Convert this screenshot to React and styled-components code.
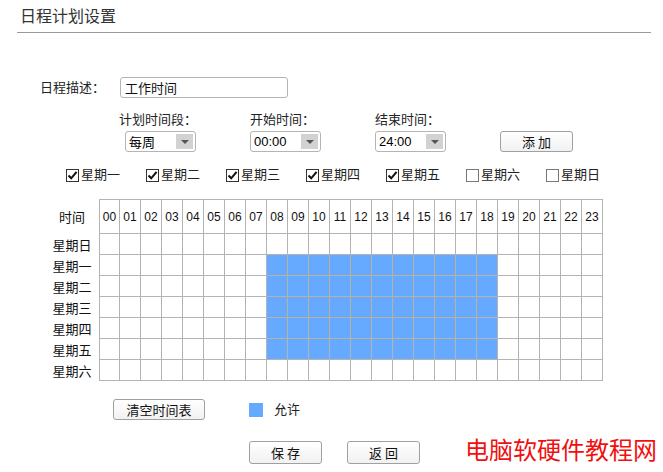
import React from 'react';
import styled, { createGlobalStyle } from 'styled-components';

const GlobalStyle = createGlobalStyle`
  body {
    margin: 0;
    background: #fff;
    color: #111;
    font-family: "Liberation Sans", "Noto Sans CJK SC", sans-serif;
  }
`;

const Page = styled.div`
  width: 663px;
  height: 472px;
  overflow: hidden;
`;

const Header = styled.div`
  margin: 0 12px 0 17px;
  padding: 7px 0 5px 3px;
  font-size: 16px;
  line-height: 20px;
  color: #333;
  border-bottom: 1px solid #9a9a9a;
`;

const DescRow = styled.div`
  display: flex;
  align-items: center;
  margin-top: 44px;
  padding-left: 40px;
  height: 21px;
`;

const Label = styled.span`
  font-size: 13px;
  line-height: 16px;
  color: #222;
  width: ${p => p.$width || 'auto'};
  margin-left: ${p => p.$shift || 0}px;
  white-space: nowrap;
`;

const TextInput = styled.input`
  box-sizing: border-box;
  width: 168px;
  height: 21px;
  border: 1px solid #b4b4b4;
  border-radius: 3px;
  padding: 0 4px;
  font-size: 13px;
  font-family: "Noto Sans CJK SC", sans-serif;
  color: #111;
  outline: none;
`;

const PeriodRow = styled.div`
  display: grid;
  grid-template-columns: repeat(4, 125px);
  margin-top: 14px;
  padding-left: 125px;
`;

const Group = styled.div`
  display: flex;
  flex-direction: column;
  gap: 3px;
`;

const Select = styled.div`
  box-sizing: border-box;
  width: 71px;
  height: 21px;
  border: 1px solid #b4b4b4;
  border-radius: 3px;
  background: #fff;
  display: flex;
  align-items: center;
  justify-content: space-between;
  padding: 0 2px 0 3px;
  font-size: 13px;
  color: #000;
`;

const Arrow = styled.span`
  width: 17px;
  height: 15px;
  background: #d2d2d2;
  display: flex;
  align-items: center;
  justify-content: center;

  &::after {
    content: '';
    border-left: 4px solid transparent;
    border-right: 4px solid transparent;
    border-top: 4px solid #555;
  }
`;

const Button = styled.button`
  box-sizing: border-box;
  width: ${p => p.$width}px;
  height: ${p => p.$height || 21}px;
  padding: 0;
  border: 1px solid #a0a0a0;
  border-radius: 3px;
  background: linear-gradient(#ffffff, #f1f1f1);
  font-size: 13px;
  font-family: "Noto Sans CJK SC", sans-serif;
  color: #111;
  white-space: pre;
`;

const AddCell = styled.div`
  display: flex;
  align-items: flex-end;
`;

const DayRow = styled.div`
  display: grid;
  grid-template-columns: repeat(7, 80px);
  margin-top: 14px;
  padding-left: 66px;
`;

const DayItem = styled.label`
  display: flex;
  align-items: center;
  gap: 2px;
  font-size: 13px;
  line-height: 18px;
  color: #222;
`;

const Box = styled.span`
  box-sizing: border-box;
  width: 13px;
  height: 13px;
  border: 1px solid ${p => (p.$checked ? '#333' : '#777')};
  background: #fff;
  display: flex;
  align-items: center;
  justify-content: center;
`;

const Table = styled.div`
  display: grid;
  grid-template-columns: 54px repeat(24, 21px);
  grid-template-rows: 35px repeat(7, 21px);
  margin: 15px 0 0 45px;
`;

const RowLabel = styled.div`
  display: flex;
  align-items: center;
  justify-content: center;
  font-size: 13px;
  color: #111;
`;

const Cell = styled.div`
  box-sizing: border-box;
  border-right: 1px solid #b3b3b3;
  border-bottom: 1px solid #b3b3b3;
  border-left: ${p => (p.$first ? '1px solid #b3b3b3' : 'none')};
  border-top: ${p => (p.$head ? '1px solid #b3b3b3' : 'none')};
  background: ${p => (p.$on ? '#66aaff' : '#fff')};
  ${p => p.$on && p.$inner && 'border-color: #bcb29c;'}
  display: flex;
  align-items: center;
  justify-content: center;
  font-size: 12px;
  color: #111;
`;

const LegendRow = styled.div`
  display: flex;
  align-items: center;
  margin-top: 18px;
  padding-left: 113px;
`;

const Swatch = styled.span`
  width: 14px;
  height: 14px;
  background: #66aaff;
  margin: 0 11px 0 44px;
`;

const ActionRow = styled.div`
  display: flex;
  align-items: flex-start;
  gap: 25px;
  margin-top: 21px;
  padding-left: 249px;
`;

const Watermark = styled.span`
  margin: -5px 0 0 20px;
  font-size: 24px;
  line-height: 26px;
  color: #f01010;
  font-family: "Noto Sans CJK SC", sans-serif;
  white-space: nowrap;
`;

const days = ['星期日', '星期一', '星期二', '星期三', '星期四', '星期五', '星期六'];
const picks = [
  ['星期一', true],
  ['星期二', true],
  ['星期三', true],
  ['星期四', true],
  ['星期五', true],
  ['星期六', false],
  ['星期日', false],
];
const hours = Array.from({ length: 24 }, (_, i) => String(i).padStart(2, '0'));

function isOn(day, hour) {
  return day >= 1 && day <= 5 && hour >= 8 && hour <= 18;
}

function Check({ checked }) {
  return (
    <Box $checked={checked}>
      {checked && (
        <svg width="11" height="11" viewBox="0 0 11 11">
          <path d="M1.5 5.5 L4.2 8.3 L9.6 1.8" fill="none" stroke="#111" strokeWidth="2" />
        </svg>
      )}
    </Box>
  );
}

export default function App() {
  return (
    <Page>
      <GlobalStyle />
      <Header>日程计划设置</Header>

      <DescRow>
        <Label $width="80px">日程描述：</Label>
        <TextInput value="工作时间" readOnly />
      </DescRow>

      <PeriodRow>
        <Group>
          <Label $shift={-6}>计划时间段：</Label>
          <Select>每周<Arrow /></Select>
        </Group>
        <Group>
          <Label>开始时间：</Label>
          <Select>00:00<Arrow /></Select>
        </Group>
        <Group>
          <Label>结束时间：</Label>
          <Select>24:00<Arrow /></Select>
        </Group>
        <AddCell>
          <Button $width={73}>添 加</Button>
        </AddCell>
      </PeriodRow>

      <DayRow>
        {picks.map(([name, checked]) => (
          <DayItem key={name}>
            <Check checked={checked} />
            {name}
          </DayItem>
        ))}
      </DayRow>

      <Table>
        <RowLabel>时间</RowLabel>
        {hours.map((h, i) => (
          <Cell key={h} $head $first={i === 0}>{h}</Cell>
        ))}
        {days.map((d, di) => (
          <React.Fragment key={d}>
            <RowLabel>{d}</RowLabel>
            {hours.map((h, hi) => (
              <Cell
                key={h}
                $first={hi === 0}
                $on={isOn(di, hi)}
                $inner={isOn(di, hi) && hi < 18 && di < 5}
              />
            ))}
          </React.Fragment>
        ))}
      </Table>

      <LegendRow>
        <Button $width={92}>清空时间表</Button>
        <Swatch />
        <Label>允许</Label>
      </LegendRow>

      <ActionRow>
        <Button $width={73} $height={23}>保 存</Button>
        <Button $width={73} $height={23}>返 回</Button>
        <Watermark>电脑软硬件教程网</Watermark>
      </ActionRow>
    </Page>
  );
}
